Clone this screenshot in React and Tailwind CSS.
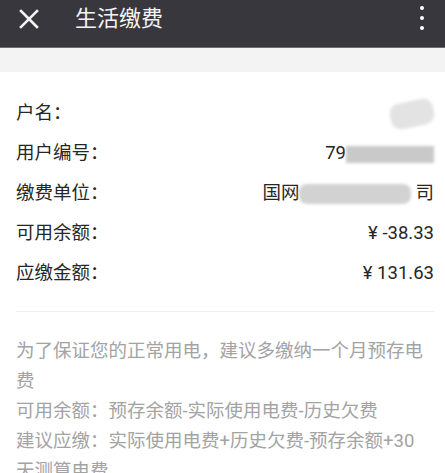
import React from 'react';

const rows = [
  { label: '户名：', kind: 'name' },
  { label: '用户编号：', kind: 'number' },
  { label: '缴费单位：', kind: 'unit' },
  { label: '可用余额：', value: '¥ -38.33' },
  { label: '应缴金额：', value: '¥ 131.63' },
];

const Blur = ({ className }) => (
  <span className={`inline-block blur-[1.5px] ${className}`} />
);

const RowValue = ({ row }) => {
  if (row.kind === 'name') {
    return (
      <span className="flex items-center">
        <Blur className="w-[44px] h-[26px] rounded-[10px] bg-[#e3e3e3] -rotate-12" />
      </span>
    );
  }
  if (row.kind === 'number') {
    return (
      <span className="flex items-center">
        <span>79</span>
        <Blur className="w-[88px] h-[17px] bg-[#c9c9c9]" />
      </span>
    );
  }
  if (row.kind === 'unit') {
    return (
      <span className="flex items-center">
        <span>国网</span>
        <Blur className="w-[112px] h-[20px] rounded-[8px] bg-[#d2d2d2]" />
        <span className="ml-[4px]">司</span>
      </span>
    );
  }
  return <span>{row.value}</span>;
};

const App = () => {
  return (
    <div className="w-[445px] h-[473px] overflow-hidden bg-white font-['Roboto','Noto_Sans_CJK_SC',sans-serif]">
      {/* Header */}
      <div className="h-[48px] bg-[#38373d] flex items-start border-b border-[#6e6e72]">
        <svg className="ml-[19px] mt-[9px]" width="20" height="20" viewBox="0 0 20 20">
          <path d="M2 2 L18 18 M18 2 L2 18" stroke="#f2f2f2" strokeWidth="2.6" strokeLinecap="square" />
        </svg>
        <h1 className="ml-[36px] mt-[6px] text-[22px] leading-[26px] text-[#f4f4f4]">生活缴费</h1>
        <div className="ml-auto mr-[21px] mt-[6px] flex flex-col gap-[6px]">
          <span className="w-[4px] h-[4px] rounded-full bg-white" />
          <span className="w-[4px] h-[4px] rounded-full bg-white" />
          <span className="w-[4px] h-[4px] rounded-full bg-white" />
        </div>
      </div>
      <div className="h-[24px] bg-[#f3f3f3]" />

      {/* Info rows */}
      <div className="pl-4 pr-[11px] pt-[22px]">
        {rows.map((row) => (
          <div key={row.label} className="h-[40px] flex items-center justify-between text-[18.5px] text-[#262626]">
            <span>{row.label}</span>
            <RowValue row={row} />
          </div>
        ))}
        <div className="mt-[17px] border-t border-[#eeeeee]" />
        <div className="pt-[24px] pr-[8px] text-[18.5px] leading-[30px] text-[#a3a3a3]">
          <p>为了保证您的正常用电，建议多缴纳一个月预存电费</p>
          <p>可用余额：预存余额-实际使用电费-历史欠费</p>
          <p>建议应缴：实际使用电费+历史欠费-预存余额+30天测算电费</p>
        </div>
      </div>
    </div>
  );
};

export default App;
